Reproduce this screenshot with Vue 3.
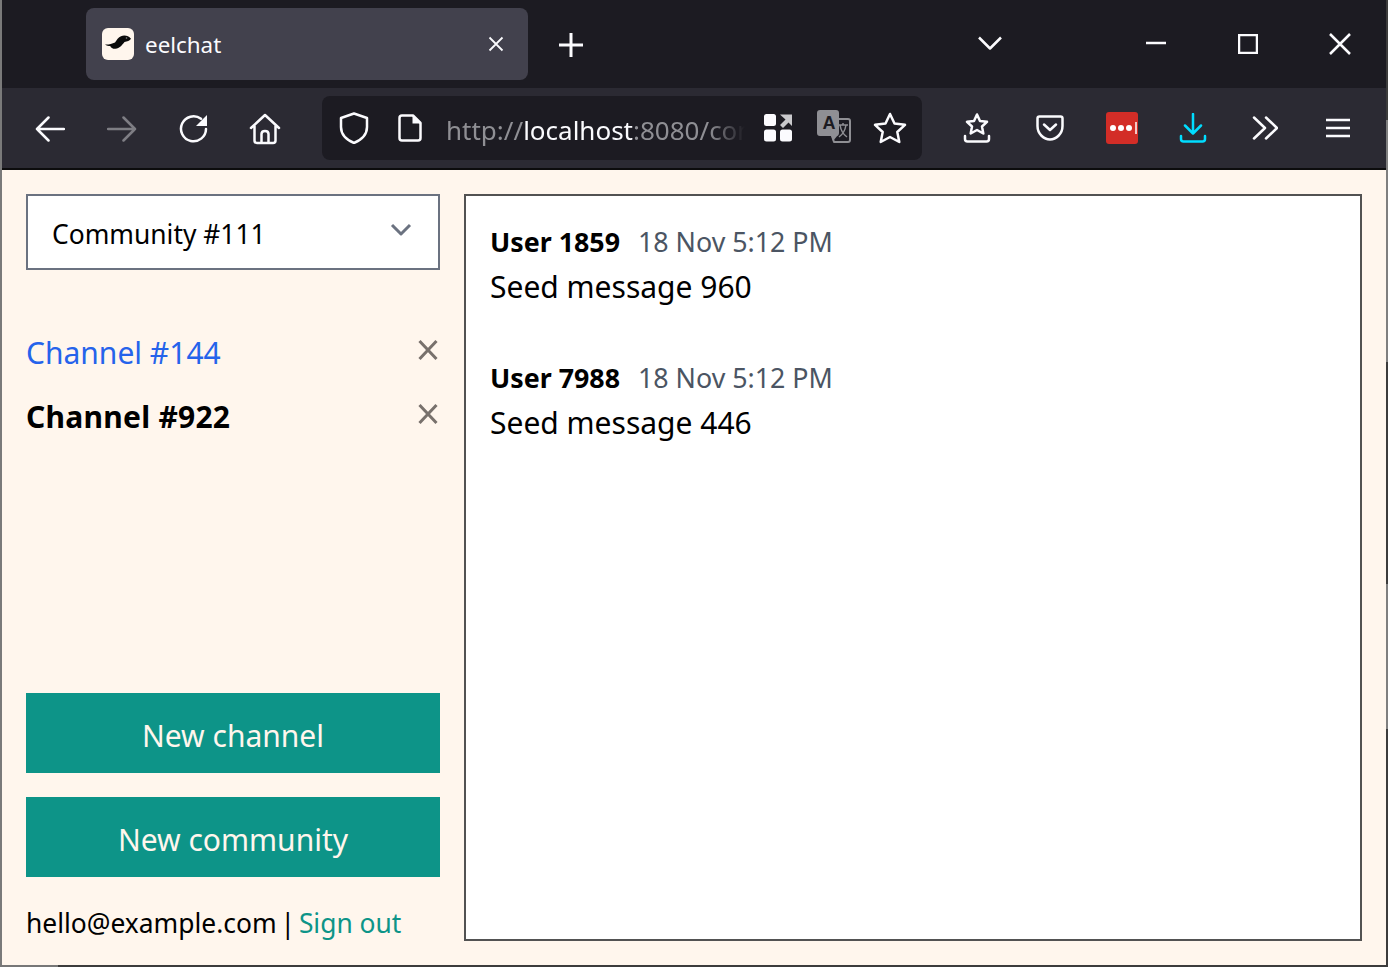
<script setup>
const channels = [
  { name: 'Channel #144', active: false },
  { name: 'Channel #922', active: true },
]
const messages = [
  { user: 'User 1859', time: '18 Nov 5:12 PM', body: 'Seed message 960' },
  { user: 'User 7988', time: '18 Nov 5:12 PM', body: 'Seed message 446' },
]
</script>

<template>
  <div class="window">
    <header class="tabbar">
      <div class="tab">
        <span class="favicon">
          <svg width="26" height="14" viewBox="0 0 26 14">
            <path d="M0 9.500C3 9.800 7 9 10 7.500 11.500 5 13.500 2.200 16 1.200 19 0 23.500 .4 26 3.800 25 5.500 22 6.800 19.500 7 17 10 14.500 13.500 10.500 13.800 8 14 6 13 5.200 11 3.500 11 1.500 10.800 0 9.500Z" fill="#0b0b0b" />
            <circle cx="21.500" cy="3" r=".8" fill="#8a8a8a" />
          </svg>
        </span>
        <span class="tab-title">eelchat</span>
        <svg class="tab-close" width="16" height="16" viewBox="0 0 16 16"><path d="M1.5 1.5 14.5 14.5M14.5 1.5 1.5 14.5" /></svg>
      </div>
      <svg class="new-tab" width="26" height="26" viewBox="0 0 26 26"><path d="M13 1V25M1 13H25" /></svg>
      <svg class="tab-list" width="26" height="16" viewBox="0 0 26 16"><path d="M2 2.5 13 13.5 24 2.5" /></svg>
      <div class="win-controls">
        <svg width="22" height="4" viewBox="0 0 22 4"><path d="M1 2H21" /></svg>
        <svg width="20" height="20" viewBox="0 0 20 20"><rect x="1" y="1" width="18" height="18" /></svg>
        <svg width="22" height="22" viewBox="0 0 22 22"><path d="M1 1 21 21M21 1 1 21" /></svg>
      </div>
    </header>

    <nav class="toolbar">
      <div class="nav-btns">
        <svg width="30" height="26" viewBox="0 0 30 26"><path d="M29 13H2M13.500 1.500 2 13 13.500 24.500" /></svg>
        <svg class="dim" width="30" height="26" viewBox="0 0 30 26"><path d="M1 13H28M16.500 1.500 28 13 16.500 24.500" /></svg>
        <svg width="30" height="30" viewBox="0 0 30 30"><path d="M27 15A12.500 12.500 0 1 1 22 4.800" /><path class="solid" d="M28 1V12H17Z" /></svg>
        <svg width="32" height="32" viewBox="0 0 32 32"><path d="M2 15 16 2 30 15M5.500 13V27.500Q5.500 30 8 30H24Q26.500 30 26.500 27.500V13M12.500 30V21Q12.500 18 16 18 19.500 18 19.500 21V30" /></svg>
      </div>
      <div class="urlbar">
        <svg width="30" height="32" viewBox="0 0 30 32"><path d="M15 1.500 28 6V15C28 23 22 28 15 31 8 28 2 23 2 15V6Z" /></svg>
        <svg class="page" width="24" height="28" viewBox="0 0 24 28"><path d="M4 1.500H15L22.500 9V24Q22.500 26.500 20 26.500H4Q1.500 26.500 1.500 24V4Q1.500 1.500 4 1.500Z" /><path class="solid" d="M14.500 1.500 22.500 9.500H14.500Z" /></svg>
        <span class="url"><span class="url-dim">http://</span><span class="url-host">localhost</span><span class="url-dim">:8080/com</span></span>
        <svg class="blocks" width="30" height="30" viewBox="0 0 30 30"><rect x="1" y="1" width="12" height="12" rx="2.500" /><rect x="1" y="16.500" width="12" height="12" rx="2.500" /><rect x="17" y="16.500" width="12" height="12" rx="2.500" /><path class="tint" d="M17 1.500H29V13L25.500 9.500 20 15 17 12 22.500 6.500 18 2.500Z" /></svg>
        <svg class="translate" width="34" height="34" viewBox="0 0 34 34">
          <rect class="t-back" x="1" y="1" width="20" height="24" rx="2" />
          <path class="t-front" d="M17 9H31Q33 9 33 11V30Q33 32 31 32H17L15 26" />
          <path class="t-fold" d="M14 25H21L16 31Z" />
          <text x="5.500" y="19" class="t-a">A</text>
          <path class="t-star" d="M21 15H31M26 13V15M23 15C24 21 27 25 30 27M29 15C28 21 25 25 22 27" />
        </svg>
        <svg width="34" height="32" viewBox="0 0 34 32"><path d="M17 2 21.500 11.500 32 12.800 24.300 20 26.300 30 17 25 7.700 30 9.700 20 2 12.800 12.500 11.500Z" /></svg>
      </div>
      <div class="tools">
        <svg class="tool-save" width="28" height="30" viewBox="0 0 28 30"><path d="M14 1.500 17 8 24 8.800 19 13.500 20.300 20.500 14 17 7.700 20.500 9 13.500 4 8.800 11 8Z" /><path d="M2 23V26Q2 28.500 4.500 28.500H23.500Q26 28.500 26 26V23" /></svg>
        <svg class="tool-pocket" width="28" height="26" viewBox="0 0 28 26"><path d="M3.500 1.500H24.500Q26.500 1.500 26.500 3.500V11C26.500 19 20 24.500 14 24.500 8 24.500 1.500 19 1.500 11V3.500Q1.500 1.500 3.500 1.500Z" /><path d="M8 9.500 14 15 20 9.500" /></svg>
        <span class="lastpass"><i></i><i></i><i></i><b></b></span>
        <svg class="tool-dl" width="28" height="30" viewBox="0 0 28 30"><path d="M14 1V20M6 12.500 14 20.500 22 12.500M2 23V26Q2 28.500 4.500 28.500H23.500Q26 28.500 26 26V23" /></svg>
        <svg class="tool-more" width="26" height="24" viewBox="0 0 26 24"><path d="M2 1.500 13 12 2 22.500M14 1.500 25 12 14 22.500" /></svg>
        <svg class="tool-menu" width="24" height="20" viewBox="0 0 24 20"><path d="M0 2H24M0 10H24M0 18H24" /></svg>
      </div>
    </nav>

    <main class="page-body">
      <aside class="sidebar">
        <div class="select">
          <span>Community #111</span>
          <svg width="22" height="14" viewBox="0 0 22 14"><path d="M2 2 11 11 20 2" /></svg>
        </div>
        <ul class="channels">
          <li v-for="c in channels" :key="c.name" :class="{ active: c.active }">
            <a>{{ c.name }}</a>
            <svg width="20" height="22" viewBox="0 0 20 22"><path d="M1.500 2 18.500 20M18.500 2 1.500 20" /></svg>
          </li>
        </ul>
        <div class="actions">
          <button>New channel</button>
          <button>New community</button>
        </div>
        <p class="account">hello@example.com | <a>Sign out</a></p>
      </aside>
      <section class="messages">
        <article v-for="m in messages" :key="m.user" class="message">
          <div class="meta"><strong>{{ m.user }}</strong><span>{{ m.time }}</span></div>
          <p>{{ m.body }}</p>
        </article>
      </section>
    </main>
  </div>
</template>

<style>
html, body { margin: 0; padding: 0; overflow: hidden; }
</style>

<style scoped>
.window {
  box-sizing: border-box;
  width: 1388px;
  height: 967px;
  padding: 0 2px 2px;
  display: flex;
  flex-direction: column;
  font-family: "Noto Sans", "Open Sans", sans-serif;
  background:
    linear-gradient(90deg, #777 0 58px, #3c3c3c 58px) bottom / 100% 2px no-repeat,
    linear-gradient(#7a7a7a, #7a7a7a) left / 2px 100% no-repeat,
    linear-gradient(#3c3c3c 0 120px, #7f7f7f 120px 362px, #3c3c3c 362px 584px, #7f7f7f 584px 729px, #3c3c3c 729px) right / 2px 100% no-repeat;
}
svg { display: block; flex: none; fill: none; stroke: #fbfbfe; stroke-width: 2.5; stroke-linecap: round; stroke-linejoin: round; }
svg .solid { fill: #fbfbfe; stroke: none; }

.tabbar {
  height: 88px;
  flex: none;
  display: flex;
  align-items: center;
  background: #1c1b22;
}
.tab {
  box-sizing: border-box;
  width: 442px;
  height: 72px;
  margin-left: 84px;
  padding: 0 24px 0 16px;
  display: flex;
  align-items: center;
  border-radius: 8px;
  background: #42414d;
}
.favicon {
  width: 32px;
  height: 32px;
  border-radius: 6px;
  background: #fff6ed;
  display: flex;
  align-items: center;
  justify-content: center;
}
.favicon svg { stroke: none; margin-bottom: 4px; }
.tab-title { margin-left: 11px; font-size: 22.4px; color: #fbfbfe; flex: 1; }
.tab-close { stroke-width: 1.8; stroke-linecap: butt; }
.new-tab { margin-left: 30px; margin-top: 2px; stroke-width: 3; stroke-linecap: butt; }
.tab-list { margin-left: 393px; margin-top: -2px; stroke-linecap: butt; }
.win-controls {
  margin-left: 142px;
  display: flex;
  align-items: center;
  gap: 71px;
}
.win-controls svg { stroke-linecap: butt; stroke-linejoin: miter; }
.win-controls svg:first-child { margin-top: -2px; }

.toolbar {
  height: 80px;
  flex: none;
  box-sizing: content-box;
  display: flex;
  align-items: center;
  background: #2b2a33;
  border-bottom: 2px solid #0c0c0d;
}
.nav-btns { margin-left: 33px; margin-top: 2px; display: flex; align-items: center; gap: 42px; }
.nav-btns .dim { opacity: .4; }
.nav-btns svg:nth-child(4) { margin-left: -2px; }
.urlbar {
  box-sizing: border-box;
  width: 600px;
  height: 64px;
  margin-left: 41px;
  padding: 0 15px 0 17px;
  display: flex;
  align-items: center;
  border-radius: 8px;
  background: #1c1b22;
  overflow: hidden;
}
.page { margin-left: 29px; }
.url {
  width: 300px;
  margin-left: 24px;
  padding-top: 4px;
  font-size: 26px;
  white-space: nowrap;
  overflow: hidden;
  -webkit-mask-image: linear-gradient(90deg, #000 88%, transparent);
  mask-image: linear-gradient(90deg, #000 88%, transparent);
}
.url-dim { color: #8f8f94; }
.url-host { color: #fbfbfe; }
.blocks { margin-left: 18px; stroke: none; fill: #fbfbfe; }
.blocks .tint { fill: #c9c9cc; }
.translate { margin-left: 24px; margin-top: -3px; stroke: #8f8f94; stroke-width: 2; }
.t-back { fill: #8f8f94; }
.t-fold { fill: #8f8f94; stroke: none; }
.t-a { font-family: "Liberation Sans", sans-serif; font-size: 18px; font-weight: 700; fill: #1c1b22; stroke: none; }
.t-star { stroke-width: 1.5; stroke-linecap: butt; }
.urlbar > svg:last-child { margin-left: 22px; }
.tools { margin-left: 41px; display: flex; align-items: center; }
.tool-pocket { margin-left: 45px; }
.lastpass {
  box-sizing: border-box;
  width: 32px;
  height: 32px;
  margin-left: 42px;
  padding-left: 4px;
  display: flex;
  align-items: center;
  gap: 2px;
  border-radius: 3px;
  background: #d32d27;
}
.lastpass i { width: 6px; height: 6px; border-radius: 50%; background: #fff; }
.lastpass b { width: 2px; height: 12px; margin-left: 1px; background: #f3c9c7; }
.tool-dl { margin-left: 41px; stroke: #00ddff; }
.tool-more { margin-left: 45px; }
.tool-menu { margin-left: 48px; stroke-linecap: butt; }

.page-body {
  flex: 1;
  min-height: 0;
  box-sizing: border-box;
  padding: 24px;
  display: flex;
  gap: 24px;
  background: #fff6ed;
}
.sidebar { width: 414px; flex: none; display: flex; flex-direction: column; }
.select {
  box-sizing: border-box;
  height: 76px;
  padding: 0 26px 0 24px;
  display: flex;
  align-items: center;
  justify-content: space-between;
  border: 2px solid #6b7280;
  background: #fff;
  font-size: 26.4px;
  color: #000;
}
.select span { padding-top: 4px; }
.select svg { margin-top: -4px; stroke: #6b7280; stroke-width: 3; stroke-linecap: butt; }
.channels { list-style: none; margin: 48px 0 0; padding: 0; flex: 1; font-size: 30px; }
.channels li {
  box-sizing: border-box;
  height: 64px;
  padding-top: 4px;
  display: flex;
  align-items: center;
  justify-content: space-between;
}
.channels a { color: #2563eb; }
.channels li svg { margin: 0 2px 4px 0; stroke: #78716c; stroke-width: 3; stroke-linecap: butt; }
.channels .active a { color: #000; font-weight: 700; letter-spacing: .25px; }
.actions { display: flex; flex-direction: column; gap: 24px; }
.actions button {
  height: 80px;
  border: 0;
  padding: 4px 0 0;
  background: #0d9488;
  color: #fff6ed;
  font: inherit;
  font-size: 30px;
}
.account { height: 40px; margin: 24px 0 0; font-size: 26.4px; line-height: 44px; word-spacing: -3px; color: #000; }
.account a { color: #0d9488; word-spacing: 0; }
.messages {
  flex: 1;
  box-sizing: border-box;
  padding: 26px 24px 24px;
  border: 2px solid #525252;
  background: #fff;
}
.message { margin-bottom: 48px; }
.meta { display: flex; gap: 18px; align-items: baseline; font-size: 26.8px; line-height: 40px; }
.meta strong { color: #000; }
.meta span { color: #4b5563; }
.message p { margin: 2px 0 0; font-size: 30px; line-height: 46px; color: #000; }
</style>
